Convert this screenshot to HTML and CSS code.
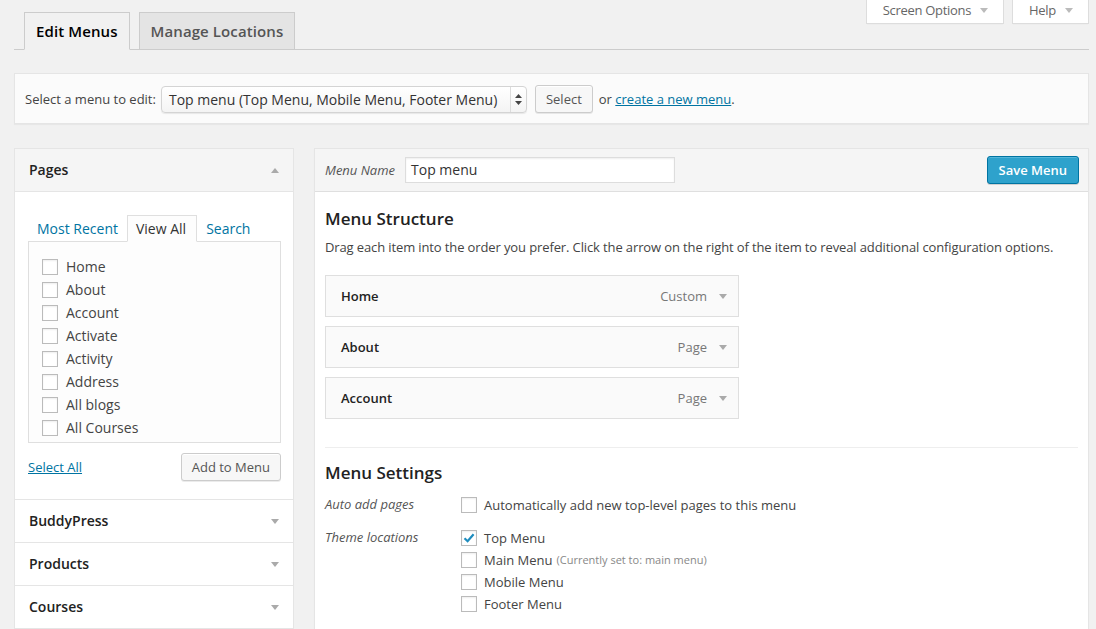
FILE: index.html
```html
<!DOCTYPE html>
<html lang="en">
<head>
<meta charset="utf-8">
<title>Menus</title>
<link rel="stylesheet" href="styles.css">
</head>
<body>
<div class="wrap">
  <div class="nav-wrapper">
    <a class="nav-tab nav-tab-active">Edit Menus</a>
    <a class="nav-tab">Manage Locations</a>
    <div class="meta-links">
      <div class="meta-toggle">Screen Options<span class="tri-down tri-light"></span></div>
      <div class="meta-toggle">Help<span class="tri-down tri-light"></span></div>
    </div>
  </div>

  <div class="manage-menus">
    <span class="manage-label">Select a menu to edit:</span>
    <div class="fake-select">
      <span class="sel-text">Top menu (Top Menu, Mobile Menu, Footer Menu)</span>
      <span class="sel-arrows">
        <svg width="7" height="11" viewBox="0 0 7 11"><path d="M3.5 0 L7 4 L0 4 Z" fill="#444"/><path d="M0 7 L7 7 L3.5 11 Z" fill="#444"/></svg>
      </span>
    </div>
    <span class="button">Select</span>
    <span class="or-text">or <a class="link">create a new menu</a>.</span>
  </div>

  <div class="columns">
    <div class="side">
      <div class="acc-section open">
        <div class="acc-title">Pages<span class="tri-up"></span></div>
        <div class="acc-content">
          <div class="item-tabs">
            <a class="item-tab">Most Recent</a>
            <a class="item-tab active">View All</a>
            <a class="item-tab">Search</a>
          </div>
          <div class="item-list">
            <div class="check-row"><span class="cb"></span>Home</div>
            <div class="check-row"><span class="cb"></span>About</div>
            <div class="check-row"><span class="cb"></span>Account</div>
            <div class="check-row"><span class="cb"></span>Activate</div>
            <div class="check-row"><span class="cb"></span>Activity</div>
            <div class="check-row"><span class="cb"></span>Address</div>
            <div class="check-row"><span class="cb"></span>All blogs</div>
            <div class="check-row"><span class="cb"></span>All Courses</div>
          </div>
          <div class="list-controls">
            <a class="link">Select All</a>
            <span class="button">Add to Menu</span>
          </div>
        </div>
      </div>
      <div class="acc-section">
        <div class="acc-title">BuddyPress<span class="tri-down"></span></div>
      </div>
      <div class="acc-section">
        <div class="acc-title">Products<span class="tri-down"></span></div>
      </div>
      <div class="acc-section">
        <div class="acc-title">Courses<span class="tri-down"></span></div>
      </div>
    </div>

    <div class="main">
      <div class="menu-header">
        <span class="menu-name-label">Menu Name</span>
        <span class="text-input">Top menu</span>
        <span class="button-primary">Save Menu</span>
      </div>
      <div class="menu-body">
        <h3>Menu Structure</h3>
        <p class="desc">Drag each item into the order you prefer. Click the arrow on the right of the item to reveal additional configuration options.</p>
        <div class="menu-items">
          <div class="menu-item"><span class="item-title">Home</span><span class="item-type">Custom</span><span class="tri-down"></span></div>
          <div class="menu-item"><span class="item-title">About</span><span class="item-type">Page</span><span class="tri-down"></span></div>
          <div class="menu-item"><span class="item-title">Account</span><span class="item-type">Page</span><span class="tri-down"></span></div>
        </div>
        <div class="menu-settings">
          <h3>Menu Settings</h3>
          <div class="setting-row">
            <div class="setting-label">Auto add pages</div>
            <div class="setting-options">
              <div class="opt"><span class="cb"></span>Automatically add new top-level pages to this menu</div>
            </div>
          </div>
          <div class="setting-row locations">
            <div class="setting-label">Theme locations</div>
            <div class="setting-options">
              <div class="opt"><span class="cb checked"><svg width="14" height="14" viewBox="0 0 14 14"><path d="M2.5 7.2 L5.6 10.2 L11.6 3.2" fill="none" stroke="#1e8cbe" stroke-width="2.2"/></svg></span>Top Menu</div>
              <div class="opt"><span class="cb"></span>Main Menu <span class="note">(Currently set to: main menu)</span></div>
              <div class="opt"><span class="cb"></span>Mobile Menu</div>
              <div class="opt"><span class="cb"></span>Footer Menu</div>
            </div>
          </div>
        </div>
      </div>
    </div>
  </div>
</div>
</body>
</html>
```

FILE: styles.css
```css
* { box-sizing: border-box; }

html, body {
  margin: 0;
  background: #f1f1f1;
}

body {
  font-family: "Open Sans", "Liberation Sans", sans-serif;
  font-size: 13px;
  line-height: 1.4;
  color: #444;
  overflow: hidden;
}

.wrap {
  padding: 0 7px 0 14px;
}

/* nav tabs */
.nav-wrapper {
  display: flex;
  align-items: flex-end;
  padding: 12px 0 0 10px;
  border-bottom: 1px solid #ccc;
}

.nav-tab {
  display: block;
  border: 1px solid #ccc;
  border-bottom: none;
  background: #e4e4e4;
  color: #555;
  font-size: 15px;
  font-weight: 600;
  letter-spacing: 0.1px;
  line-height: 36px;
  padding: 0 11px;
  margin-right: 9px;
}

.nav-tab-active {
  background: #f1f1f1;
  color: #000;
  border-bottom: 1px solid #f1f1f1;
  margin-bottom: -1px;
}

.meta-links {
  margin-left: auto;
  align-self: flex-start;
  margin-top: -12px;
  display: flex;
  gap: 8px;
}

.meta-toggle {
  height: 24px;
  line-height: 18px;
  background: #fff;
  border: 1px solid #ddd;
  border-top: none;
  padding: 0 15px 4px 16px;
  color: #666;
  font-size: 13px;
  letter-spacing: -0.3px;
  box-shadow: 0 1px 1px -1px rgba(0,0,0,.1);
  display: flex;
  align-items: center;
}

.tri-down {
  display: inline-block;
  width: 0;
  height: 0;
  border-left: 4px solid transparent;
  border-right: 4px solid transparent;
  border-top: 5px solid #aaa;
}

.tri-up {
  display: inline-block;
  width: 0;
  height: 0;
  border-left: 4px solid transparent;
  border-right: 4px solid transparent;
  border-bottom: 5px solid #aaa;
}

.tri-light {
  border-top-color: #bbb;
  margin-left: 9px;
  margin-top: 1px;
}

/* manage menus bar */
.manage-menus {
  margin-top: 23px;
  background: #fbfbfb;
  border: 1px solid #e5e5e5;
  box-shadow: 0 1px 1px rgba(0,0,0,.04);
  padding: 11px 10px 10px;
  display: flex;
  align-items: center;
}

.manage-label {
  margin-right: 5px;
}

.fake-select {
  width: 366px;
  height: 27px;
  display: flex;
  align-items: stretch;
  border: 1px solid #d4d4d4;
  border-radius: 4px;
  background: linear-gradient(#ffffff, #f4f4f4);
  box-shadow: 0 1px 1px rgba(0,0,0,.08);
  color: #333;
  font-size: 14px;
}

.sel-text {
  flex: 1;
  padding-left: 7px;
  line-height: 25px;
  white-space: nowrap;
  overflow: hidden;
}

.sel-arrows {
  width: 16px;
  border-left: 1px solid #dcdcdc;
  display: flex;
  align-items: center;
  justify-content: center;
}

.button {
  display: inline-block;
  height: 28px;
  line-height: 26px;
  padding: 0 10px;
  border: 1px solid #ccc;
  border-radius: 3px;
  background: #f7f7f7;
  box-shadow: inset 0 1px 0 #fff, 0 1px 0 rgba(0,0,0,.08);
  color: #555;
  font-size: 13px;
  white-space: nowrap;
}

.manage-menus .button {
  margin-left: 8px;
}

.or-text {
  margin-left: 6px;
}

.link {
  color: #0074a2;
  text-decoration: underline;
}

/* columns */
.columns {
  margin-top: 24px;
  display: flex;
  gap: 20px;
  align-items: flex-start;
}

.side {
  width: 280px;
  flex: none;
  border: 1px solid #e5e5e5;
  border-top: none;
  background: #fff;
}

.acc-section {
  border-top: 1px solid #e5e5e5;
}

.acc-title {
  height: 42px;
  padding: 0 14px;
  display: flex;
  align-items: center;
  justify-content: space-between;
  font-size: 14px;
  font-weight: 600;
  color: #222;
  background: #fff;
}

.acc-section.open .acc-title {
  background: #f5f5f5;
  border-bottom: 1px solid #e5e5e5;
  height: 43px;
}

.acc-content {
  padding: 23px 12px 18px 13px;
}

.item-tabs {
  display: flex;
  align-items: flex-end;
}

.item-tab {
  display: block;
  padding: 0 8px;
  line-height: 25px;
  font-size: 14px;
  color: #0074a2;
  border: 1px solid transparent;
  border-bottom: none;
}

.item-tab.active {
  color: #333;
  background: #fdfdfd;
  border-color: #dfdfdf;
  border-bottom: 1px solid #fdfdfd;
  margin-bottom: -1px;
  padding: 0 10px 0 8px;
  position: relative;
}

.item-list {
  border: 1px solid #dfdfdf;
  background: #fdfdfd;
  padding: 13px 0 3px 13px;
}

.check-row {
  height: 23px;
  display: flex;
  align-items: center;
  font-size: 14px;
  color: #444;
}

.cb {
  width: 16px;
  height: 16px;
  flex: none;
  border: 1px solid #bbb;
  background: #fff;
  box-shadow: inset 0 1px 2px rgba(0,0,0,.07);
  margin-right: 8px;
  display: flex;
  align-items: center;
  justify-content: center;
}

.list-controls {
  margin-top: 10px;
  display: flex;
  justify-content: space-between;
  align-items: center;
}

/* main */
.main {
  flex: 1;
  border: 1px solid #e5e5e5;
  background: #fff;
  box-shadow: 0 1px 1px rgba(0,0,0,.04);
}

.menu-header {
  height: 43px;
  background: #f5f5f5;
  border-bottom: 1px solid #dfdfdf;
  padding: 0 9px 0 10px;
  display: flex;
  align-items: center;
}

.menu-name-label {
  font-style: italic;
  color: #555;
  margin-right: 10px;
}

.text-input {
  width: 270px;
  height: 26px;
  line-height: 24px;
  border: 1px solid #ddd;
  background: #fff;
  box-shadow: inset 0 1px 2px rgba(0,0,0,.07);
  padding: 0 5px;
  font-size: 14px;
  color: #333;
}

.button-primary {
  margin-left: auto;
  height: 28px;
  line-height: 26px;
  padding: 0 11px;
  background: #2ea2cc;
  border: 1px solid #0074a2;
  border-radius: 3px;
  box-shadow: inset 0 1px 0 rgba(120,200,230,.5), 0 1px 0 rgba(0,0,0,.15);
  color: #fff;
  font-weight: 600;
  font-size: 13px;
}

.menu-body {
  padding: 0 10px 40px;
}

h3 {
  margin: 15px 0 0;
  font-size: 17px;
  font-weight: 600;
  line-height: 24px;
  color: #222;
}

.desc {
  margin: 6px 0 0;
  line-height: 20px;
  color: #444;
  letter-spacing: -0.12px;
}

.menu-items {
  margin-top: 18px;
}

.menu-item {
  width: 414px;
  height: 42px;
  margin-bottom: 9px;
  border: 1px solid #dfdfdf;
  background: #fafafa;
  display: flex;
  align-items: center;
  padding: 0 11px 0 15px;
}

.item-title {
  font-weight: 600;
  color: #222;
  flex: 1;
}

.item-type {
  color: #777;
  margin-right: 12px;
}

.menu-settings {
  margin-top: 28px;
  border-top: 1px solid #eee;
}

.menu-settings h3 {
  margin-top: 13px;
}

.setting-row {
  display: flex;
  margin-top: 9px;
}

.setting-row.locations {
  margin-top: 11px;
}

.setting-label {
  width: 136px;
  flex: none;
  font-style: italic;
  color: #555;
  line-height: 20px;
}

.opt {
  height: 22px;
  display: flex;
  align-items: center;
  color: #444;
}

.opt .cb {
  margin-right: 7px;
}

.note {
  font-size: 11px;
  color: #888;
  margin-left: 4px;
}
```
